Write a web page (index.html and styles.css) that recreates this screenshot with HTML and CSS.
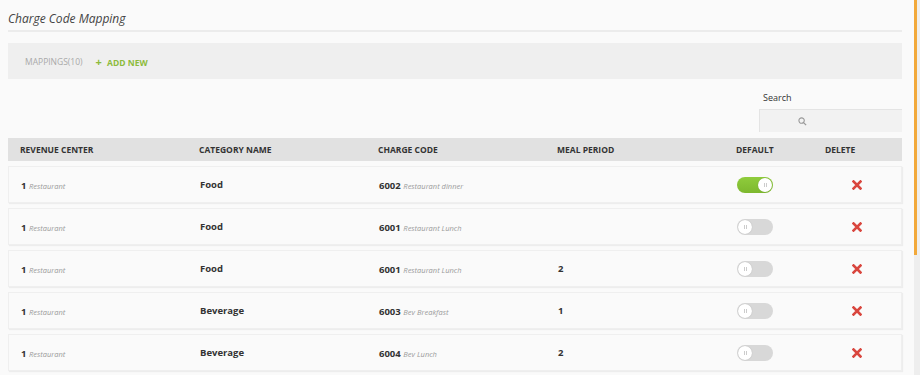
FILE: index.html
```html
<!DOCTYPE html>
<html>
<head>
<meta charset="utf-8">
<link rel="stylesheet" href="styles.css">
</head>
<body>
<div class="page">
  <h1 class="title">Charge Code Mapping</h1>
  <div class="toolbar">
    <span class="count">MAPPINGS(10)</span>
    <a class="add"><span class="plus">+</span> ADD NEW</a>
  </div>
  <div class="search-row">
    <div class="search">
      <label class="search-label">Search</label>
      <div class="search-input">
        <svg width="9" height="9" viewBox="0 0 10 10"><circle cx="4" cy="4" r="3" fill="none" stroke="#999" stroke-width="1.2"/><line x1="6.2" y1="6.2" x2="9" y2="9" stroke="#999" stroke-width="1.4"/></svg>
      </div>
    </div>
  </div>
  <div class="table">
    <div class="thead">
      <div>REVENUE CENTER</div>
      <div>CATEGORY NAME</div>
      <div>CHARGE CODE</div>
      <div>MEAL PERIOD</div>
      <div>DEFAULT</div>
      <div>DELETE</div>
    </div>

    <div class="row">
      <div><b>1</b> <i class="sub">Restaurant</i></div>
      <div class="cat">Food</div>
      <div><b>6002</b> <i class="sub">Restaurant dinner</i></div>
      <div class="meal"></div>
      <div><span class="toggle on"><span class="knob"></span></span></div>
      <div class="del"><svg width="10" height="10" viewBox="0 0 10 10"><path d="M1.5 1.5 L8.5 8.5 M8.5 1.5 L1.5 8.5" stroke="#d9463e" stroke-width="2.6" stroke-linecap="square"/></svg></div>
    </div>

    <div class="row">
      <div><b>1</b> <i class="sub">Restaurant</i></div>
      <div class="cat">Food</div>
      <div><b>6001</b> <i class="sub">Restaurant Lunch</i></div>
      <div class="meal"></div>
      <div><span class="toggle"><span class="knob"></span></span></div>
      <div class="del"><svg width="10" height="10" viewBox="0 0 10 10"><path d="M1.5 1.5 L8.5 8.5 M8.5 1.5 L1.5 8.5" stroke="#d9463e" stroke-width="2.6" stroke-linecap="square"/></svg></div>
    </div>

    <div class="row">
      <div><b>1</b> <i class="sub">Restaurant</i></div>
      <div class="cat">Food</div>
      <div><b>6001</b> <i class="sub">Restaurant Lunch</i></div>
      <div class="meal">2</div>
      <div><span class="toggle"><span class="knob"></span></span></div>
      <div class="del"><svg width="10" height="10" viewBox="0 0 10 10"><path d="M1.5 1.5 L8.5 8.5 M8.5 1.5 L1.5 8.5" stroke="#d9463e" stroke-width="2.6" stroke-linecap="square"/></svg></div>
    </div>

    <div class="row">
      <div><b>1</b> <i class="sub">Restaurant</i></div>
      <div class="cat">Beverage</div>
      <div><b>6003</b> <i class="sub">Bev Breakfast</i></div>
      <div class="meal">1</div>
      <div><span class="toggle"><span class="knob"></span></span></div>
      <div class="del"><svg width="10" height="10" viewBox="0 0 10 10"><path d="M1.5 1.5 L8.5 8.5 M8.5 1.5 L1.5 8.5" stroke="#d9463e" stroke-width="2.6" stroke-linecap="square"/></svg></div>
    </div>

    <div class="row">
      <div><b>1</b> <i class="sub">Restaurant</i></div>
      <div class="cat">Beverage</div>
      <div><b>6004</b> <i class="sub">Bev Lunch</i></div>
      <div class="meal">2</div>
      <div><span class="toggle"><span class="knob"></span></span></div>
      <div class="del"><svg width="10" height="10" viewBox="0 0 10 10"><path d="M1.5 1.5 L8.5 8.5 M8.5 1.5 L1.5 8.5" stroke="#d9463e" stroke-width="2.6" stroke-linecap="square"/></svg></div>
    </div>
  </div>
</div>
<div class="scrollbar"><div class="thumb"></div></div>
</body>
</html>
```

FILE: styles.css
```css
html, body {
  margin: 0;
  padding: 0;
  background: #fafafa;
  overflow: hidden;
  height: 375px;
}
body {
  font-family: "Open Sans", "Liberation Sans", sans-serif;
  color: #333;
}
.page {
  padding: 0 18px 0 8px;
}
.title {
  margin: 0;
  padding-top: 12px;
  height: 18px;
  font-size: 12px;
  font-weight: 400;
  font-style: italic;
  color: #444;
  line-height: 14px;
  border-bottom: 2px solid #ececec;
}
.toolbar {
  margin-top: 11px;
  height: 36px;
  background: #efefef;
  display: flex;
  align-items: center;
  padding-left: 17px;
  font-size: 8.5px;
  gap: 13px;
}
.count {
  color: #a9a9a9;
}
.add {
  color: #8dbb3c;
  font-weight: 700;
}
.plus {
  font-size: 11px;
  margin-right: 3px;
}
.search-row {
  display: flex;
  justify-content: flex-end;
  margin-top: 13px;
}
.search {
  width: 143px;
  display: flex;
  flex-direction: column;
}
.search-label {
  font-size: 9px;
  color: #333;
  padding-left: 4px;
  line-height: 12px;
  height: 17px;
}
.search-input {
  height: 22px;
  background: #f2f2f2;
  border-top: 1px solid #e4e4e4;
  border-left: 1px solid #e4e4e4;
  display: flex;
  align-items: center;
  padding-left: 38px;
}
.table {
  margin-top: 6px;
}
.thead, .row {
  display: grid;
  grid-template-columns: 179px 179px 179px 179px 89px 1fr;
  padding-left: 12px;
  align-items: center;
}
.thead {
  height: 23px;
  background: #e1e1e1;
  font-size: 8.5px;
  font-weight: 700;
  color: #333;
}
.row {
  height: 35px;
  margin-top: 5px;
  background: #fafafa;
  border: 1px solid #efefef;
  box-shadow: 1px 1px 1px rgba(0,0,0,0.05);
  font-size: 10px;
}
.row b {
  font-weight: 700;
  font-size: 9.5px;
}
.sub {
  font-size: 7.5px;
  color: #9a9a9a;
  font-weight: 400;
}
.cat {
  font-weight: 700;
  font-size: 9.5px;
}
.meal {
  font-weight: 700;
  font-size: 9.5px;
}
.toggle {
  display: inline-block;
  width: 36px;
  height: 16px;
  border-radius: 8px;
  background: #d8d8d8;
  position: relative;
  vertical-align: middle;
}
.toggle.on {
  background: linear-gradient(#8fcc3c, #7db82e);
}
.knob {
  position: absolute;
  top: 1px;
  left: 1px;
  width: 14px;
  height: 14px;
  border-radius: 50%;
  background: #fff;
  box-shadow: 0 0 1px rgba(0,0,0,0.25);
}
.knob::before {
  content: "";
  position: absolute;
  left: 6px;
  top: 5px;
  width: 1px;
  height: 4px;
  border-left: 1px solid #ccc;
  border-right: 1px solid #ccc;
}
.toggle.on .knob {
  left: 21px;
}
.del {
  padding-left: 26px;
  display: flex;
  align-items: center;
}
.scrollbar {
  position: fixed;
  top: 0;
  right: 0;
  width: 6px;
  height: 375px;
  background: #eeeeee;
}
.thumb {
  width: 3px;
  height: 255px;
  background: #f2a93b;
}
```
